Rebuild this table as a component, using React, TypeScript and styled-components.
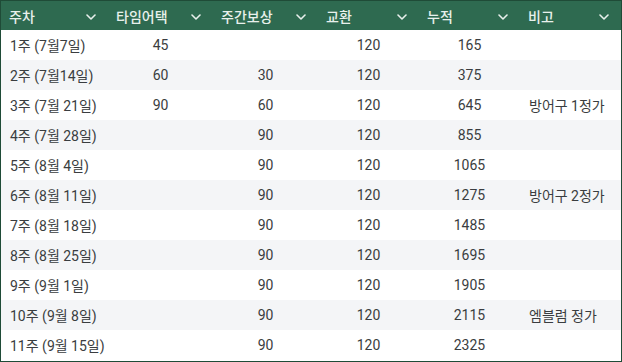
import React from 'react';
import styled, { createGlobalStyle } from 'styled-components';

const GlobalStyle = createGlobalStyle`
  html, body {
    margin: 0;
    padding: 0;
    background: #ffffff;
  }
  body {
    font-family: Roboto, 'Noto Sans CJK KR', sans-serif;
  }
`;

const COLUMNS = '107px 105px 105px 101px 101px 101px';

const TableFrame = styled.div`
  width: 622px;
  height: 362px;
  box-sizing: border-box;
  border: 1px solid #1f4b37;
  background: #ffffff;
  overflow: hidden;
`;

const HeaderRow = styled.div`
  display: grid;
  grid-template-columns: ${COLUMNS};
  height: 29px;
  background: #2e6a50;
`;

const HeaderCell = styled.div`
  display: flex;
  align-items: center;
  justify-content: space-between;
  padding: 0 12px 0 8px;
  color: #e8f0ec;
  font-size: 14px;
  font-weight: 500;
  font-family: Roboto, 'Noto Sans CJK KR', sans-serif;
`;

const Chevron = styled.svg`
  width: 10px;
  height: 6px;
  margin-top: 3px;
`;

const BodyRow = styled.div<{ $shaded: boolean }>`
  display: grid;
  grid-template-columns: ${COLUMNS};
  height: 30px;
  background: ${(p) => (p.$shaded ? '#f4f5f7' : '#ffffff')};
`;

const Cell = styled.div<{ $align: 'left' | 'center' }>`
  display: flex;
  align-items: center;
  justify-content: ${(p) => (p.$align === 'center' ? 'center' : 'flex-start')};
  padding: ${(p) => (p.$align === 'center' ? '0' : '0 0 0 9px')};
  color: #3a3d40;
  font-size: 14px;
  font-family: Roboto, 'Noto Sans CJK KR', sans-serif;
  white-space: nowrap;
`;

const headers = ['주차', '타임어택', '주간보상', '교환', '누적', '비고'];

const rows: string[][] = [
  ['1주 (7월7일)', '45', '', '120', '165', ''],
  ['2주 (7월14일)', '60', '30', '120', '375', ''],
  ['3주 (7월 21일)', '90', '60', '120', '645', '방어구 1정가'],
  ['4주 (7월 28일)', '', '90', '120', '855', ''],
  ['5주 (8월 4일)', '', '90', '120', '1065', ''],
  ['6주 (8월 11일)', '', '90', '120', '1275', '방어구 2정가'],
  ['7주 (8월 18일)', '', '90', '120', '1485', ''],
  ['8주 (8월 25일)', '', '90', '120', '1695', ''],
  ['9주 (9월 1일)', '', '90', '120', '1905', ''],
  ['10주 (9월 8일)', '', '90', '120', '2115', '엠블럼 정가'],
  ['11주 (9월 15일)', '', '90', '120', '2325', ''],
];

const ChevronIcon = () => (
  <Chevron viewBox="0 0 10 6">
    <path d="M1 1 L5 5 L9 1" fill="none" stroke="#e8f0ec" strokeWidth="1.6" strokeLinecap="round" strokeLinejoin="round" />
  </Chevron>
);

const App = () => {
  return (
    <>
      <GlobalStyle />
      <TableFrame>
        <HeaderRow>
          {headers.map((h) => (
            <HeaderCell key={h}>
              <span>{h}</span>
              <ChevronIcon />
            </HeaderCell>
          ))}
        </HeaderRow>
        {rows.map((row, i) => (
          <BodyRow key={i} $shaded={i % 2 === 1}>
            {row.map((value, j) => (
              <Cell key={j} $align={j === 0 || j === 5 ? 'left' : 'center'}>
                {value}
              </Cell>
            ))}
          </BodyRow>
        ))}
      </TableFrame>
    </>
  );
};

export default App;
